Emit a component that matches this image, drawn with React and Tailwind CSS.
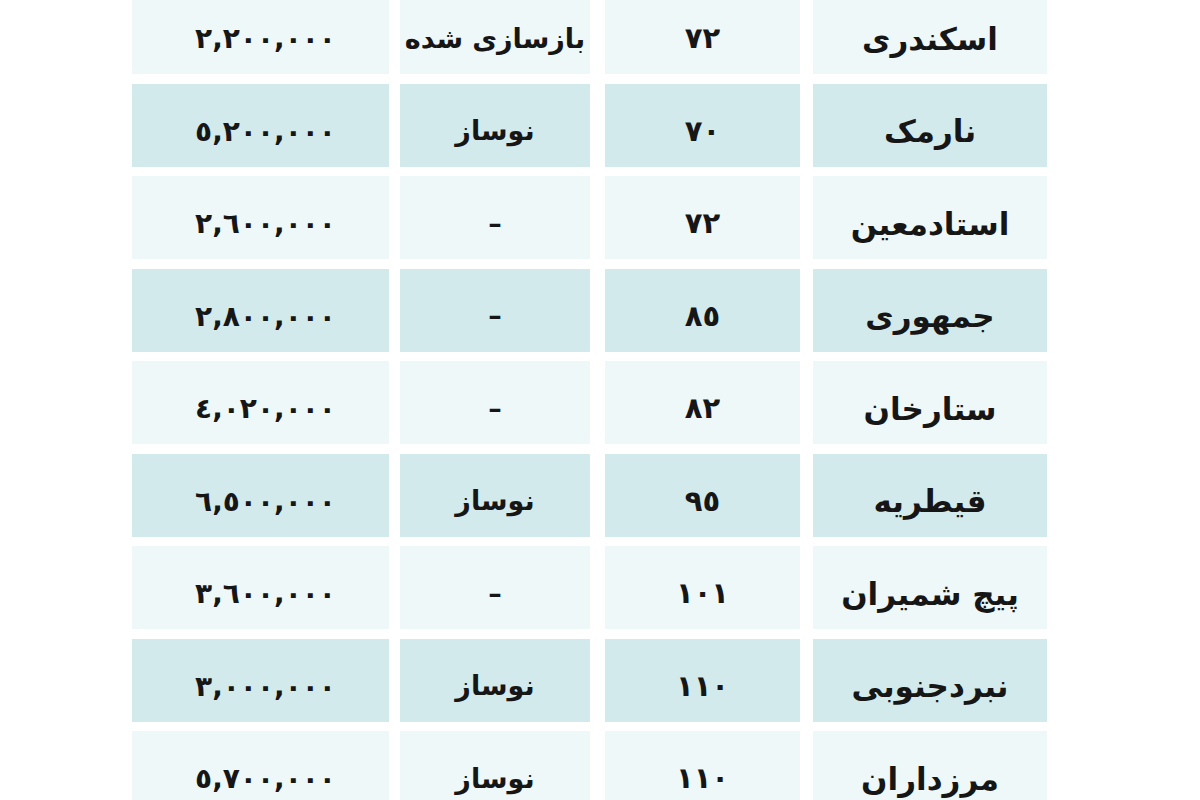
const rows = [
  { name: "اسکندری", area: "٧٢", status: "بازسازی شده", price: "٢,٢٠٠,٠٠٠" },
  { name: "نارمک", area: "٧٠", status: "نوساز", price: "٥,٢٠٠,٠٠٠" },
  { name: "استادمعین", area: "٧٢", status: "–", price: "٢,٦٠٠,٠٠٠" },
  { name: "جمهوری", area: "٨٥", status: "–", price: "٢,٨٠٠,٠٠٠" },
  { name: "ستارخان", area: "٨٢", status: "–", price: "٤,٠٢٠,٠٠٠" },
  { name: "قیطریه", area: "٩٥", status: "نوساز", price: "٦,٥٠٠,٠٠٠" },
  { name: "پیچ شمیران", area: "١٠١", status: "–", price: "٣,٦٠٠,٠٠٠" },
  { name: "نبردجنوبی", area: "١١٠", status: "نوساز", price: "٣,٠٠٠,٠٠٠" },
  { name: "مرزداران", area: "١١٠", status: "نوساز", price: "٥,٧٠٠,٠٠٠" },
];

function Cell({ children, className }) {
  return (
    <div className={"flex items-center justify-center pt-[13px] " + className}>
      {children}
    </div>
  );
}

export default function App() {
  return (
    <div className="h-[800px] w-[1200px] overflow-hidden bg-white font-['DejaVu_Sans',sans-serif] text-[#161616]">
      <div className="-mt-[9px] flex flex-col gap-[9.5px] pl-[132px]">
        {rows.map((r, i) => {
          const bg = i % 2 === 1 ? "bg-[#d3eaed]" : "bg-[#eef8f9]";
          return (
            <div key={i} className="flex h-[83px]">
              <Cell className={"w-[257px] pl-[10px] text-[28px] font-bold tracking-[6px] " + bg}>
                <span dir="rtl">{r.price}</span>
              </Cell>
              <Cell className={"ml-[11px] w-[190px] text-[27px] font-bold " + bg}>
                <span dir="rtl" className="whitespace-nowrap">{r.status}</span>
              </Cell>
              <Cell className={"ml-[15px] w-[195px] text-[29px] font-bold tracking-[1px] " + bg}>
                <span dir="rtl">{r.area}</span>
              </Cell>
              <Cell className={"ml-[13px] w-[234px] text-[31px] font-bold " + bg}>
                <span dir="rtl">{r.name}</span>
              </Cell>
            </div>
          );
        })}
      </div>
    </div>
  );
}
